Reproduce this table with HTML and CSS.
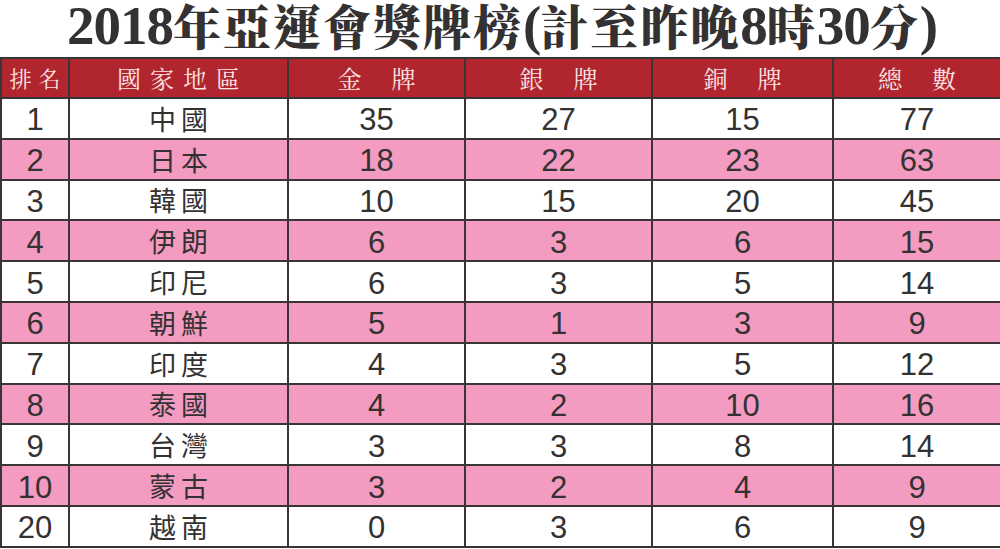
FILE: index.html
```html
<!DOCTYPE html>
<html lang="zh-Hant">
<head>
<meta charset="utf-8">
<title>2018年亞運會獎牌榜</title>
<link rel="stylesheet" href="styles.css">
</head>
<body>
<h1 class="title"><span class="num">2018</span>年亞運會獎牌榜<span class="num">(</span>計至昨晚<span class="num">8</span>時<span class="num">30</span>分<span class="num">)</span></h1>
<div class="board">
  <div class="row head">
    <div class="cell rank">排名</div>
    <div class="cell">國家地區</div>
    <div class="cell wide">金 牌</div>
    <div class="cell wide">銀 牌</div>
    <div class="cell wide">銅 牌</div>
    <div class="cell wide">總 數</div>
  </div>
  <div class="row"><div class="cell">1</div><div class="cell name">中國</div><div class="cell">35</div><div class="cell">27</div><div class="cell">15</div><div class="cell">77</div></div>
  <div class="row pink"><div class="cell">2</div><div class="cell name">日本</div><div class="cell">18</div><div class="cell">22</div><div class="cell">23</div><div class="cell">63</div></div>
  <div class="row"><div class="cell">3</div><div class="cell name">韓國</div><div class="cell">10</div><div class="cell">15</div><div class="cell">20</div><div class="cell">45</div></div>
  <div class="row pink"><div class="cell">4</div><div class="cell name">伊朗</div><div class="cell">6</div><div class="cell">3</div><div class="cell">6</div><div class="cell">15</div></div>
  <div class="row"><div class="cell">5</div><div class="cell name">印尼</div><div class="cell">6</div><div class="cell">3</div><div class="cell">5</div><div class="cell">14</div></div>
  <div class="row pink"><div class="cell">6</div><div class="cell name">朝鮮</div><div class="cell">5</div><div class="cell">1</div><div class="cell">3</div><div class="cell">9</div></div>
  <div class="row"><div class="cell">7</div><div class="cell name">印度</div><div class="cell">4</div><div class="cell">3</div><div class="cell">5</div><div class="cell">12</div></div>
  <div class="row pink"><div class="cell">8</div><div class="cell name">泰國</div><div class="cell">4</div><div class="cell">2</div><div class="cell">10</div><div class="cell">16</div></div>
  <div class="row"><div class="cell">9</div><div class="cell name">台灣</div><div class="cell">3</div><div class="cell">3</div><div class="cell">8</div><div class="cell">14</div></div>
  <div class="row pink"><div class="cell">10</div><div class="cell name">蒙古</div><div class="cell">3</div><div class="cell">2</div><div class="cell">4</div><div class="cell">9</div></div>
  <div class="row"><div class="cell">20</div><div class="cell name">越南</div><div class="cell">0</div><div class="cell">3</div><div class="cell">6</div><div class="cell">9</div></div>
</div>
</body>
</html>
```
FILE: styles.css
```css
html, body {
  margin: 0;
  padding: 0;
  background: #ffffff;
  overflow: hidden;
}
body {
  width: 1000px;
  height: 549px;
}
.title {
  margin: 0;
  height: 57px;
  display: flex;
  align-items: center;
  justify-content: center;
  font-family: "Noto Serif CJK TC", "Noto Sans CJK TC", serif;
  font-weight: 900;
  font-size: 48px;
  line-height: 1;
  color: #333132;
  letter-spacing: 2px;
  padding-bottom: 7px;
  padding-left: 4px;
  box-sizing: border-box;
  white-space: nowrap;
}
.title .num {
  font-family: "Liberation Serif", serif;
  font-weight: 700;
  font-size: 55px;
  letter-spacing: -1px;
}
.board {
  border-top: 2px solid #3a3436;
  border-left: 2px solid #3a3436;
}
.row {
  display: grid;
  grid-template-columns: 68px 219px 177px 187px 181px 1fr;
  height: 40.8px;
  background: #ffffff;
}
.row.pink {
  background: #f49bc1;
}
.row.head {
  height: 40px;
  background: #b1262e;
}
.cell {
  box-sizing: border-box;
  border-right: 2px solid #3a3436;
  border-bottom: 2px solid #3a3436;
  display: flex;
  align-items: center;
  justify-content: center;
  font-family: "Liberation Sans", Arial, sans-serif;
  font-size: 31px;
  color: #333132;
  line-height: 1;
  padding-top: 3px;
  white-space: nowrap;
}
.cell:last-child {
  border-right: none;
}
.cell.name {
  font-family: "Noto Sans CJK TC", sans-serif;
  font-size: 27px;
  letter-spacing: 5px;
  padding-left: 5px;
  padding-top: 0;
}
.head .cell {
  font-family: "Noto Serif CJK TC", "Noto Sans CJK TC", serif;
  font-weight: 400;
  font-size: 24px;
  color: #fbe4e4;
  letter-spacing: 9px;
  padding-left: 9px;
  padding-top: 0;
}
.head .cell.wide {
  word-spacing: 6px;
}
.head .cell.rank {
  font-size: 22px;
  letter-spacing: 7px;
  padding-left: 7px;
}
```
